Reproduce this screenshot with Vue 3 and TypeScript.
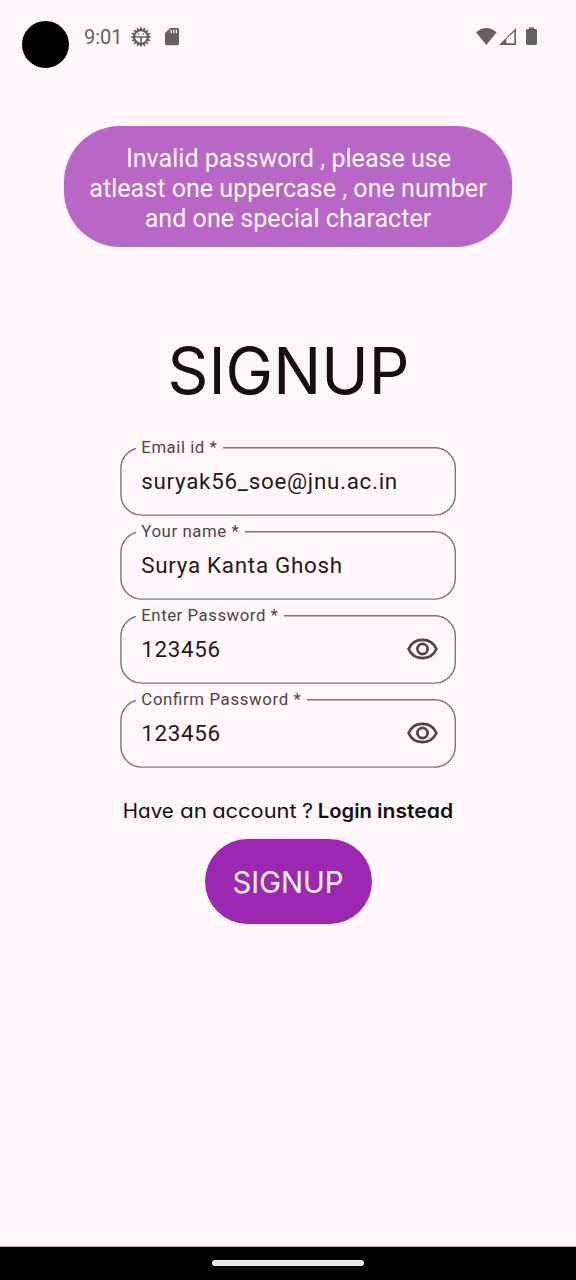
<script setup lang="ts">
import { ref } from 'vue'

interface Field {
  id: string
  label: string
  labelWidth: number
  value: string
  valueWidth: number
  secret: boolean
}

interface Word {
  text: string
  x: number
  width: number
  link: boolean
}

const fields = ref<Field[]>([
  { id: 'email', label: 'Email id *', labelWidth: 76, value: 'suryak56_soe@jnu.ac.in', valueWidth: 256, secret: false },
  { id: 'name', label: 'Your name *', labelWidth: 98, value: 'Surya Kanta Ghosh', valueWidth: 201, secret: false },
  { id: 'password', label: 'Enter Password *', labelWidth: 137, value: '123456', valueWidth: 79, secret: true },
  { id: 'confirm', label: 'Confirm Password *', labelWidth: 160, value: '123456', valueWidth: 79, secret: true },
])

const words: Word[] = [
  { text: 'Have', x: 2.8, width: 51, link: false },
  { text: 'an', x: 60, width: 27, link: false },
  { text: 'account', x: 92.2, width: 84.5, link: false },
  { text: '?', x: 182, width: 11, link: false },
  { text: 'Login', x: 197.8, width: 54, link: true },
  { text: 'instead', x: 257, width: 76.2, link: true },
]

const teeth = Array.from({ length: 16 }, (_, i) => i * 22.5)
</script>

<template>
  <div class="screen">
    <header class="status">
      <span class="camera"></span>
      <span class="clock">9:01</span>
      <svg class="gear" width="20" height="20" viewBox="0 0 20 20">
        <g fill="#656065">
          <path v-for="a in teeth" :key="a" d="M8.5 3L9.5 .1h1L11.5 3z" :transform="`rotate(${a} 10 10)`" />
        </g>
        <circle cx="10" cy="10" r="6.8" fill="none" stroke="#656065" stroke-width="2" />
        <path d="M3.5 10h13M10 10v7" stroke="#656065" stroke-width="1.6" />
        <circle cx="7.6" cy="6.9" r=".8" fill="#656065" />
        <circle cx="12.4" cy="6.9" r=".8" fill="#656065" />
      </svg>
      <svg class="card" width="14" height="18" viewBox="0 0 14 18">
        <path d="M5.2 0H12.8Q14 0 14 1.3V15.8Q14 17.3 12.6 17.3H1.5Q0 17.3 0 15.8V5z" fill="#656065" />
        <path d="M6.2 1.8v3.5M8.8 1.8v3.5M11.4 1.8v3.5" stroke="#fff7fa" stroke-width="1.2" />
      </svg>
      <svg class="system" width="64" height="20" viewBox="0 0 64 20">
        <path d="M0 5.3Q10.3-3.3 20.6 5.3L10.3 18z" fill="#656065" />
        <path d="M23 18L40 1V18z" fill="#656065" />
        <path d="M30.3 16.3V12.1L38.4 4.4V16.3z" fill="#fff7fa" />
        <path d="M53 .6h5V2h1.5Q61 2 61 3.5V16.6Q61 18 59.5 18H51.5Q50 18 50 16.6V3.5Q50 2 51.5 2H53z" fill="#656065" />
      </svg>
    </header>

    <div class="toast">
      Invalid password , please use<br />atleast one uppercase , one number<br />and one special character
    </div>

    <h1 class="title">
      <svg width="260" height="80" viewBox="0 0 260 80">
        <text x="9.5" y="64" textLength="242" lengthAdjust="spacingAndGlyphs">SIGNUP</text>
      </svg>
    </h1>

    <form class="form" @submit.prevent>
      <label v-for="f in fields" :key="f.id" class="field">
        <svg class="outline" width="336" height="70" viewBox="0 0 336 70">
          <rect x=".9" y=".7" width="334.4" height="67.4" rx="20.5" />
        </svg>
        <span class="caption">
          <svg :width="f.labelWidth" height="20">
            <text x=".3" y="15.5" :textLength="f.labelWidth - 0.5">{{ f.label }}</text>
          </svg>
        </span>
        <svg class="value" width="262" height="34">
          <text x=".2" y="23.7" :textLength="f.valueWidth">{{ f.value }}</text>
        </svg>
        <svg v-if="f.secret" class="eye" width="32" height="24" viewBox="0 0 32 24">
          <path d="M2.6 12C5.4 5.7 10.6 2.9 16.5 2.9S27.6 5.7 30.4 12C27.6 18.3 22.4 21.1 16.5 21.1S5.4 18.3 2.6 12z" />
          <circle cx="16.5" cy="12" r="5.1" />
        </svg>
      </label>
    </form>

    <p class="account">
      <svg width="336" height="36" viewBox="0 0 336 36">
        <text
          v-for="w in words"
          :key="w.text"
          :class="{ link: w.link }"
          :x="w.x"
          y="25"
          :textLength="w.width"
          lengthAdjust="spacingAndGlyphs"
        >{{ w.text }}</text>
      </svg>
    </p>

    <button class="submit" type="button">
      <svg width="120" height="50" viewBox="0 0 120 50">
        <text x="4.5" y="36" textLength="111" lengthAdjust="spacingAndGlyphs">SIGNUP</text>
      </svg>
    </button>

    <footer class="nav"><span class="handle"></span></footer>
  </div>
</template>

<style>
body {
  margin: 0;
  background: #fff7fa;
}
</style>

<style scoped>
.screen {
  display: flex;
  flex-direction: column;
  align-items: center;
  box-sizing: border-box;
  width: 576px;
  height: 1280px;
  overflow: hidden;
  background: #fff7fa;
  font-family: Roboto, "Liberation Sans", sans-serif;
}
svg {
  display: block;
  flex: none;
}
.status {
  display: flex;
  align-items: flex-start;
  align-self: stretch;
  box-sizing: border-box;
  height: 126px;
  padding: 21px 36px 0 21.5px;
}
.camera {
  width: 47px;
  height: 47px;
  border-radius: 50%;
  background: #000;
}
.clock {
  width: 38px;
  margin: 4px 0 0 15.5px;
  color: #656065;
  font-size: 20px;
  line-height: 24px;
}
.gear {
  margin: 5.5px 0 0 8.5px;
}
.card {
  margin: 7px 0 0 14px;
}
.system {
  margin: 6px 0 0 auto;
}
.toast {
  flex: none;
  box-sizing: border-box;
  width: 448px;
  height: 121px;
  padding-top: 18px;
  border-radius: 56px;
  background: #b967c7;
  color: #fff7fa;
  font-size: 25.1px;
  line-height: 30px;
  text-indent: 1px;
  text-align: center;
  white-space: nowrap;
}
.title {
  margin: 83px 0 0;
  font-weight: 400;
}
.title text {
  font: 400 65px Inter, sans-serif;
  fill: #121012;
}
.form {
  display: flex;
  flex-direction: column;
  gap: 14px;
  margin-top: 37px;
}
.field {
  position: relative;
  display: flex;
  align-items: center;
  width: 336px;
  height: 70px;
}
.outline {
  position: absolute;
  inset: 0;
}
.outline rect {
  fill: none;
  stroke: #7f747c;
  stroke-width: 1.4;
}
.caption {
  position: absolute;
  top: -10px;
  left: 16px;
  padding: 0 6px 0 5px;
  background: #fff7fa;
}
.caption text {
  font-size: 16.8px;
  fill: #4d444c;
}
.value {
  margin-left: 21px;
}
.value text {
  font-size: 22.4px;
  fill: #1f1a1f;
}
.eye {
  margin: -2px 0 0 3px;
}
.eye path,
.eye circle {
  fill: none;
  stroke: #4d444c;
  stroke-width: 2.7;
}
.account {
  margin: 24px 0 0;
}
.account text {
  font: 400 19.8px Inter, sans-serif;
  font-feature-settings: "cv11";
  fill: #121012;
}
.account .link {
  font-weight: 600;
}
.submit {
  display: flex;
  align-items: center;
  justify-content: center;
  flex: none;
  width: 167px;
  height: 85px;
  margin-top: 10px;
  padding: 0;
  border: 0;
  border-radius: 42.5px;
  background: #9c27b0;
}
.submit text {
  font: 400 29.5px Inter, sans-serif;
  fill: #fff7fa;
}
.nav {
  display: flex;
  align-items: center;
  justify-content: center;
  align-self: stretch;
  flex: none;
  box-sizing: border-box;
  height: 34px;
  margin-top: auto;
  padding-bottom: 1px;
  border-top: 1px solid #b8b0b4;
  background: #000;
}
.handle {
  width: 152px;
  height: 6px;
  border-radius: 3px;
  background: #e8e8e8;
}
</style>
